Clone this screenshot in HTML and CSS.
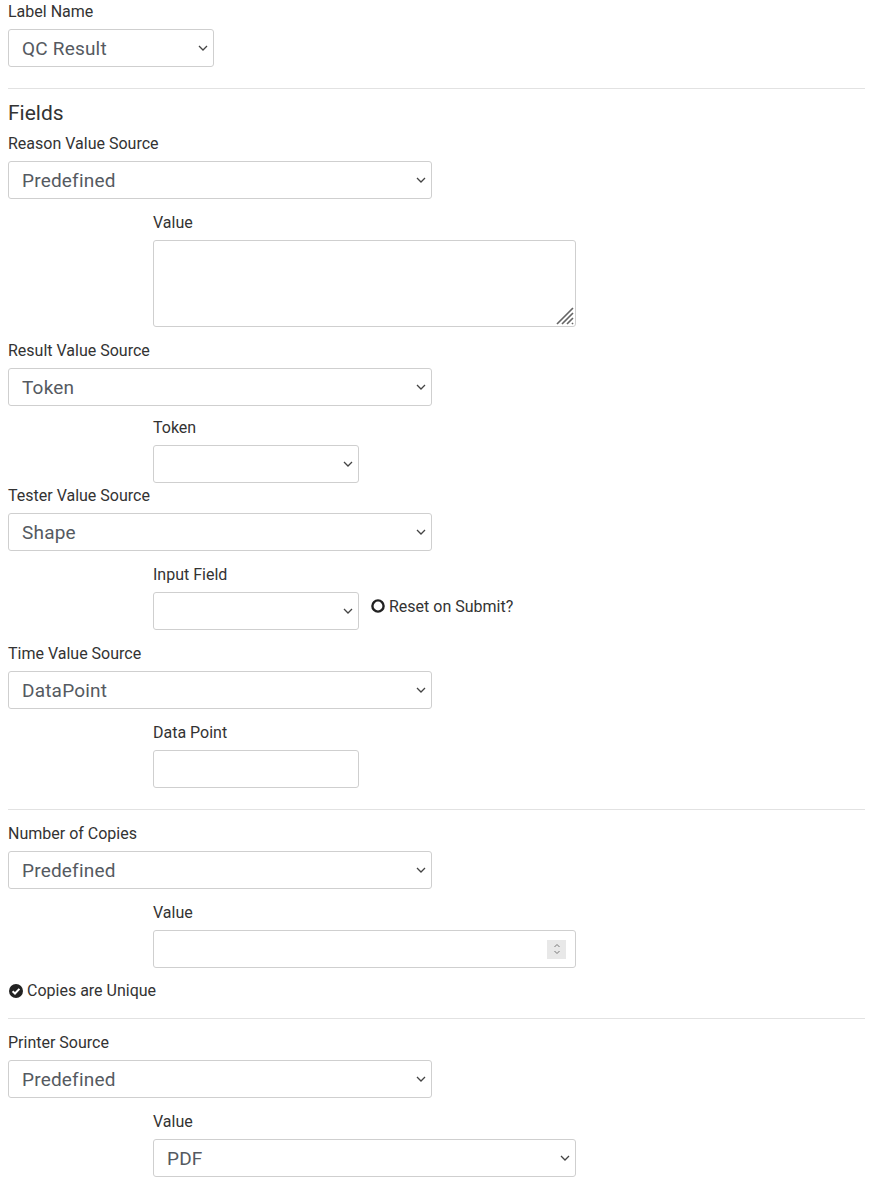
FILE: index.html
```html
<!DOCTYPE html>
<html>
<head>
<meta charset="utf-8">
<link rel="stylesheet" href="styles.css">
</head>
<body>
<div class="page">
  <div class="group">
    <label class="lbl">Label Name</label>
    <div class="select narrow"><span>QC Result</span><svg class="chev" viewBox="0 0 10 6"><path d="M1 1 L5 5 L9 1" fill="none" stroke="#444" stroke-width="1.3"/></svg></div>
  </div>
  <hr class="sep first">
  <h3 class="title">Fields</h3>

  <div class="group">
    <label class="lbl">Reason Value Source</label>
    <div class="select wide"><span>Predefined</span><svg class="chev" viewBox="0 0 10 6"><path d="M1 1 L5 5 L9 1" fill="none" stroke="#444" stroke-width="1.3"/></svg></div>
  </div>
  <div class="group sub">
    <label class="lbl">Value</label>
    <div class="area-wrap">
      <textarea class="area"></textarea>
      <svg class="grip" viewBox="0 0 22 22"><path d="M21 5 L5 21 M21 10 L10 21 M21 15 L15 21 M21 20 L20 21" fill="none" stroke="#666" stroke-width="1.7"/></svg>
    </div>
  </div>

  <div class="group short">
    <label class="lbl">Result Value Source</label>
    <div class="select wide"><span>Token</span><svg class="chev" viewBox="0 0 10 6"><path d="M1 1 L5 5 L9 1" fill="none" stroke="#444" stroke-width="1.3"/></svg></div>
  </div>
  <div class="group sub tight">
    <label class="lbl">Token</label>
    <div class="select narrow"><span></span><svg class="chev" viewBox="0 0 10 6"><path d="M1 1 L5 5 L9 1" fill="none" stroke="#444" stroke-width="1.3"/></svg></div>
  </div>

  <div class="group">
    <label class="lbl">Tester Value Source</label>
    <div class="select wide"><span>Shape</span><svg class="chev" viewBox="0 0 10 6"><path d="M1 1 L5 5 L9 1" fill="none" stroke="#444" stroke-width="1.3"/></svg></div>
  </div>
  <div class="group sub">
    <label class="lbl">Input Field</label>
    <div class="row">
      <div class="select narrow"><span></span><svg class="chev" viewBox="0 0 10 6"><path d="M1 1 L5 5 L9 1" fill="none" stroke="#444" stroke-width="1.3"/></svg></div>
      <div class="toggle"><svg class="ico" viewBox="0 0 16 16"><circle cx="8" cy="8" r="5.6" fill="none" stroke="#222" stroke-width="2.4"/></svg><span>Reset on Submit?</span></div>
    </div>
  </div>

  <div class="group">
    <label class="lbl">Time Value Source</label>
    <div class="select wide"><span>DataPoint</span><svg class="chev" viewBox="0 0 10 6"><path d="M1 1 L5 5 L9 1" fill="none" stroke="#444" stroke-width="1.3"/></svg></div>
  </div>
  <div class="group sub">
    <label class="lbl">Data Point</label>
    <div class="input narrow"></div>
  </div>

  <hr class="sep">

  <div class="group">
    <label class="lbl">Number of Copies</label>
    <div class="select wide"><span>Predefined</span><svg class="chev" viewBox="0 0 10 6"><path d="M1 1 L5 5 L9 1" fill="none" stroke="#444" stroke-width="1.3"/></svg></div>
  </div>
  <div class="group sub short">
    <label class="lbl">Value</label>
    <div class="input mid num"><span class="spin"><svg viewBox="0 0 8 14"><path d="M1.5 5 L4 2.5 L6.5 5 M1.5 9 L4 11.5 L6.5 9" fill="none" stroke="#777" stroke-width="1"/></svg></span></div>
  </div>
  <div class="toggle check"><svg class="ico" viewBox="0 0 16 16"><circle cx="8" cy="8" r="7" fill="#222"/><path d="M4.6 8.2 L7 10.5 L11.4 5.9" fill="none" stroke="#fff" stroke-width="2"/></svg><span>Copies are Unique</span></div>

  <hr class="sep">

  <div class="group">
    <label class="lbl">Printer Source</label>
    <div class="select wide"><span>Predefined</span><svg class="chev" viewBox="0 0 10 6"><path d="M1 1 L5 5 L9 1" fill="none" stroke="#444" stroke-width="1.3"/></svg></div>
  </div>
  <div class="group sub">
    <label class="lbl">Value</label>
    <div class="select mid"><span>PDF</span><svg class="chev" viewBox="0 0 10 6"><path d="M1 1 L5 5 L9 1" fill="none" stroke="#444" stroke-width="1.3"/></svg></div>
  </div>
</div>
</body>
</html>
```
FILE: styles.css
```css
html, body {
  margin: 0;
  padding: 0;
  background: #fff;
}
body {
  font-family: Roboto, "Liberation Sans", sans-serif;
  color: #333;
}
.page {
  padding: 0 5px 0 8px;
  width: 857px;
}
.group {
  display: flex;
  flex-direction: column;
  align-items: flex-start;
  margin-bottom: 12px;
}
.group.sub {
  padding-left: 145px;
}
.group.short {
  margin-bottom: 10px;
}
.group.tight {
  margin-bottom: 1px;
}
.lbl {
  font-size: 16px;
  line-height: 24px;
  margin-bottom: 5px;
  color: #333;
}
.select, .input {
  box-sizing: border-box;
  height: 38px;
  border: 1px solid #cfcfcf;
  border-radius: 3px;
  display: flex;
  align-items: center;
  padding: 0 5px 0 13px;
  font-size: 19px;
  letter-spacing: 0.2px;
  color: #555a61;
  background: #fff;
}
.select span {
  flex: 1;
}
.chev {
  width: 10px;
  height: 6px;
}
.narrow { width: 206px; }
.wide { width: 424px; }
.mid { width: 423px; }
.area-wrap {
  position: relative;
  width: 423px;
  height: 87px;
}
.area {
  display: block;
  box-sizing: border-box;
  width: 423px;
  height: 87px;
  border: 1px solid #cfcfcf;
  border-radius: 3px;
  margin: 0;
  resize: none;
  font-family: inherit;
}
.grip {
  position: absolute;
  right: 2px;
  bottom: 2px;
  width: 22px;
  height: 22px;
}
.num {
  justify-content: flex-end;
  padding-right: 9px;
}
.spin {
  width: 19px;
  height: 19px;
  background: #e8e8e8;
  display: flex;
  align-items: center;
  justify-content: center;
}
.spin svg {
  width: 8px;
  height: 14px;
}
.row {
  display: flex;
  align-items: center;
  gap: 11px;
}
.toggle {
  display: flex;
  align-items: center;
  font-size: 16px;
  color: #333;
  gap: 3px;
  margin-top: -10px;
}
.ico {
  width: 16px;
  height: 16px;
}
.check {
  margin: 11px 0 15px 0;
  line-height: 24px;
}
.sep {
  border: 0;
  border-top: 1px solid #e2e2e2;
  margin: 0 0 12px 0;
  width: 857px;
  height: 0;
}
.sep.first {
  margin-top: 21px;
}
.group.sub + .sep {
  margin-top: 21px;
}
.title {
  font-size: 21px;
  font-weight: 400;
  line-height: 24px;
  margin: 0 0 7px 0;
  color: #333;
}
```
